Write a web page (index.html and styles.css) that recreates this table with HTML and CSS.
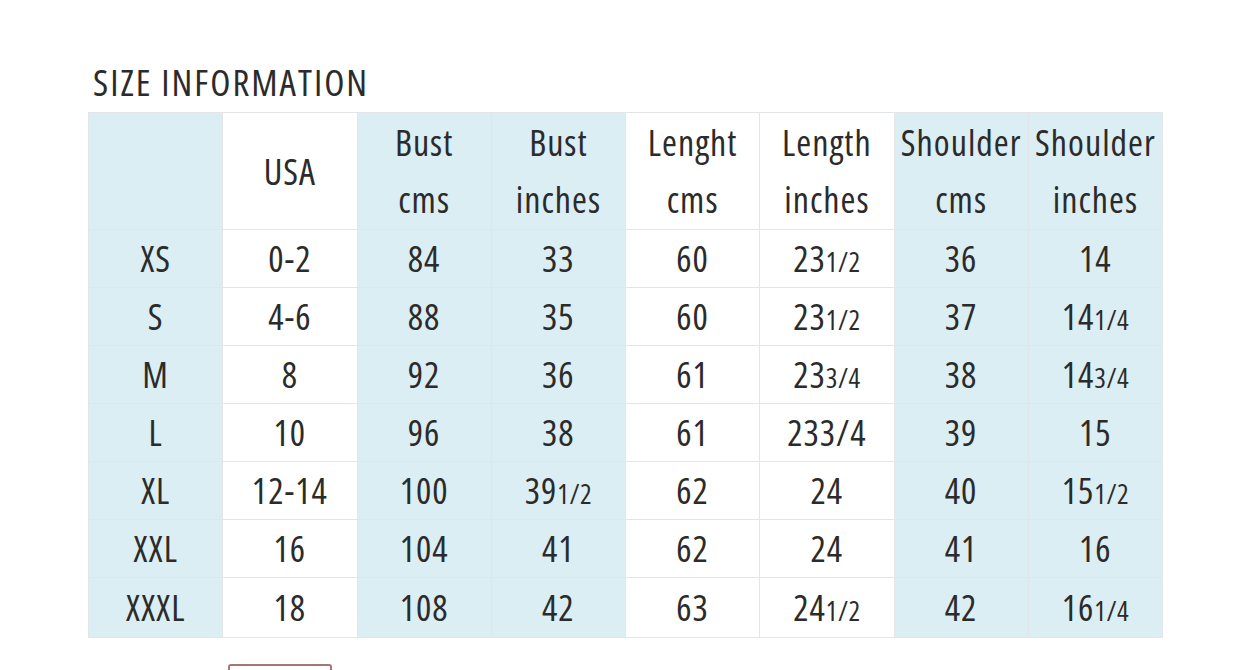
FILE: index.html
```html
<!DOCTYPE html>
<html>
<head>
<meta charset="utf-8">
<link rel="stylesheet" href="styles.css">
</head>
<body>
<div class="page">
  <h1 class="title">SIZE INFORMATION</h1>
  <table class="sizes">
    <colgroup>
      <col class="c-blue"><col class="c-white"><col class="c-blue"><col class="c-blue">
      <col class="c-white"><col class="c-white"><col class="c-blue"><col class="c-blue">
    </colgroup>
    <thead>
      <tr>
        <th></th>
        <th>USA</th>
        <th>Bust<br>cms</th>
        <th>Bust<br>inches</th>
        <th>Lenght<br>cms</th>
        <th>Length<br>inches</th>
        <th>Shoulder<br>cms</th>
        <th>Shoulder<br>inches</th>
      </tr>
    </thead>
    <tbody>
      <tr><td>XS</td><td>0-2</td><td>84</td><td>33</td><td>60</td><td>23<span class="frac">1/2</span></td><td>36</td><td>14</td></tr>
      <tr><td>S</td><td>4-6</td><td>88</td><td>35</td><td>60</td><td>23<span class="frac">1/2</span></td><td>37</td><td>14<span class="frac">1/4</span></td></tr>
      <tr><td>M</td><td>8</td><td>92</td><td>36</td><td>61</td><td>23<span class="frac">3/4</span></td><td>38</td><td>14<span class="frac">3/4</span></td></tr>
      <tr><td>L</td><td>10</td><td>96</td><td>38</td><td>61</td><td>233/4</td><td>39</td><td>15</td></tr>
      <tr><td>XL</td><td>12-14</td><td>100</td><td>39<span class="frac">1/2</span></td><td>62</td><td>24</td><td>40</td><td>15<span class="frac">1/2</span></td></tr>
      <tr><td>XXL</td><td>16</td><td>104</td><td>41</td><td>62</td><td>24</td><td>41</td><td>16</td></tr>
      <tr><td>XXXL</td><td>18</td><td>108</td><td>42</td><td>63</td><td>24<span class="frac">1/2</span></td><td>42</td><td>16<span class="frac">1/4</span></td></tr>
    </tbody>
  </table>
  <div class="tab-stub"></div>
</div>
</body>
</html>
```
FILE: styles.css
```css
html, body {
  margin: 0;
  padding: 0;
  background: #ffffff;
  overflow: hidden;
}
.page {
  padding: 60px 0 0 88px;
  font-family: "Open Sans", "Liberation Sans", sans-serif;
  font-stretch: 75%;
  color: #2b2b2b;
}
.title {
  margin: 0 0 8px 5px;
  font-size: 37px;
  font-weight: 400;
  line-height: 44px;
  letter-spacing: 2px;
  color: #2b2b2b;
}
.sizes {
  border-collapse: collapse;
  table-layout: fixed;
  width: 1075px;
}
.c-blue { background: #dbeef4; }
.c-white { background: #ffffff; }
.sizes th,
.sizes td {
  border: 1px solid #e2e6e8;
  padding: 0;
  text-align: center;
  font-size: 36px;
  font-weight: 400;
  letter-spacing: 1px;
  line-height: 57px;
  height: 57px;
  white-space: nowrap;
}
.sizes th {
  height: 116px;
}
.sizes tbody tr:last-child td {
  height: 59px;
}
.frac {
  font-size: 0.76em;
  letter-spacing: 0.5px;
  line-height: 0;
}
.tab-stub {
  width: 100px;
  height: 20px;
  margin: 26px 0 0 140px;
  border: 2px solid #a87474;
  border-bottom: none;
  border-radius: 3px 3px 0 0;
}
```
